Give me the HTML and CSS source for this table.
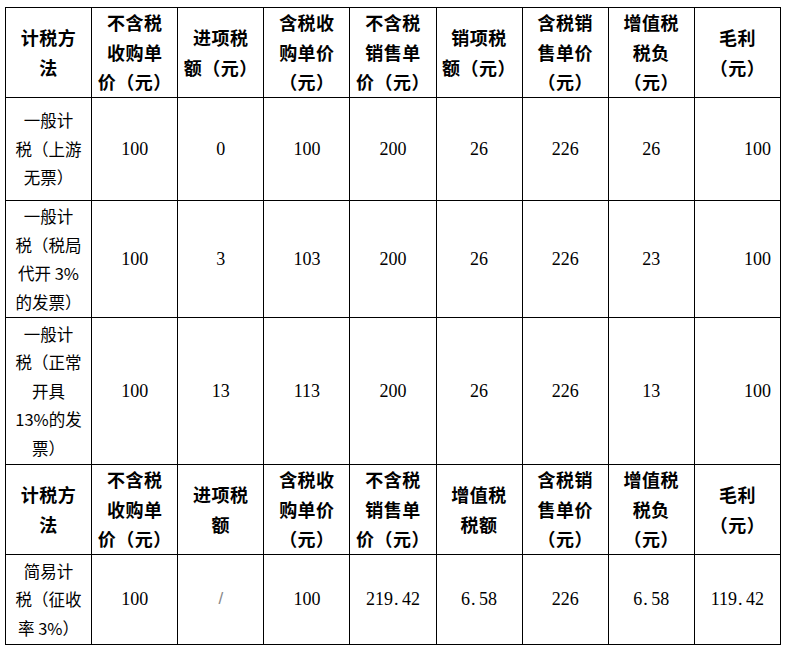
FILE: index.html
```html
<!DOCTYPE html>
<html lang="zh-CN">
<head>
<meta charset="utf-8">
<title>计税方法对比</title>
<link rel="stylesheet" href="styles.css">
</head>
<body>
<table class="tax">
  <colgroup>
    <col class="c"><col class="c"><col class="c"><col class="c"><col class="c"><col class="c"><col class="c"><col class="c"><col class="c">
  </colgroup>
  <tr class="head">
    <th>计税方<br>法</th>
    <th>不含税<br>收购单<br>价（元）</th>
    <th>进项税<br>额（元）</th>
    <th>含税收<br>购单价<br>（元）</th>
    <th>不含税<br>销售单<br>价（元）</th>
    <th>销项税<br>额（元）</th>
    <th>含税销<br>售单价<br>（元）</th>
    <th>增值税<br>税负<br>（元）</th>
    <th>毛利<br>（元）</th>
  </tr>
  <tr class="r1">
    <td class="m">一般计<br>税（上游<br>无票）</td>
    <td>100</td><td>0</td><td>100</td><td>200</td><td>26</td><td>226</td><td>26</td><td class="rt">100</td>
  </tr>
  <tr class="r2">
    <td class="m">一般计<br>税（税局<br>代开 3%<br>的发票）</td>
    <td>100</td><td>3</td><td>103</td><td>200</td><td>26</td><td>226</td><td>23</td><td class="rt">100</td>
  </tr>
  <tr class="r3">
    <td class="m">一般计<br>税（正常<br>开具<br>13%的发<br>票）</td>
    <td>100</td><td>13</td><td>113</td><td>200</td><td>26</td><td>226</td><td>13</td><td class="rt">100</td>
  </tr>
  <tr class="head">
    <th>计税方<br>法</th>
    <th>不含税<br>收购单<br>价（元）</th>
    <th>进项税<br>额</th>
    <th>含税收<br>购单价<br>（元）</th>
    <th>不含税<br>销售单<br>价（元）</th>
    <th>增值税<br>税额</th>
    <th>含税销<br>售单价<br>（元）</th>
    <th>增值税<br>税负<br>（元）</th>
    <th>毛利<br>（元）</th>
  </tr>
  <tr class="r5">
    <td class="m">简易计<br>税（征收<br>率 3%）</td>
    <td>100</td><td class="slash">/</td><td>100</td><td>219<span class="pt">.</span>42</td><td>6<span class="pt">.</span>58</td><td>226</td><td>6<span class="pt">.</span>58</td><td>119<span class="pt">.</span>42</td>
  </tr>
</table>
</body>
</html>
```

FILE: styles.css
```css
html, body {
  background: #ffffff;
}
body {
  margin: 7px 0 0 5px;
  font-family: "Liberation Serif", "Noto Sans CJK SC", serif;
  color: #000;
}
.tax {
  border-collapse: collapse;
  table-layout: fixed;
  width: 776px;
}
.tax col.c {
  width: 86px;
}
.tax th, .tax td {
  border: 1px solid #000;
  padding: 0;
  text-align: center;
  vertical-align: middle;
  white-space: nowrap;
}
.tax th {
  font-family: "Noto Sans CJK SC", sans-serif;
  font-weight: 700;
  font-size: 18px;
  letter-spacing: 0.5px;
  line-height: 29.5px;
  height: 89px;
}
.tax td {
  font-size: 18px;
  line-height: 28.5px;
}
.tax td.m {
  font-family: "Noto Sans CJK SC", sans-serif;
  font-weight: 400;
  font-size: 16.5px;
}
.tax tr.r1 td { height: 102px; }
.tax tr.r2 td { height: 116px; }
.tax tr.r3 td { height: 146px; }
.tax tr.r5 td { height: 89px; }
.tax td.rt {
  text-align: right;
  padding-right: 9px;
}
.tax td.slash {
  color: #888;
  font-family: "Liberation Sans", sans-serif;
  font-size: 17px;
}
.pt {
  display: inline-block;
  width: 0.5em;
  text-align: left;
  padding-left: 1px;
  box-sizing: border-box;
}
```
